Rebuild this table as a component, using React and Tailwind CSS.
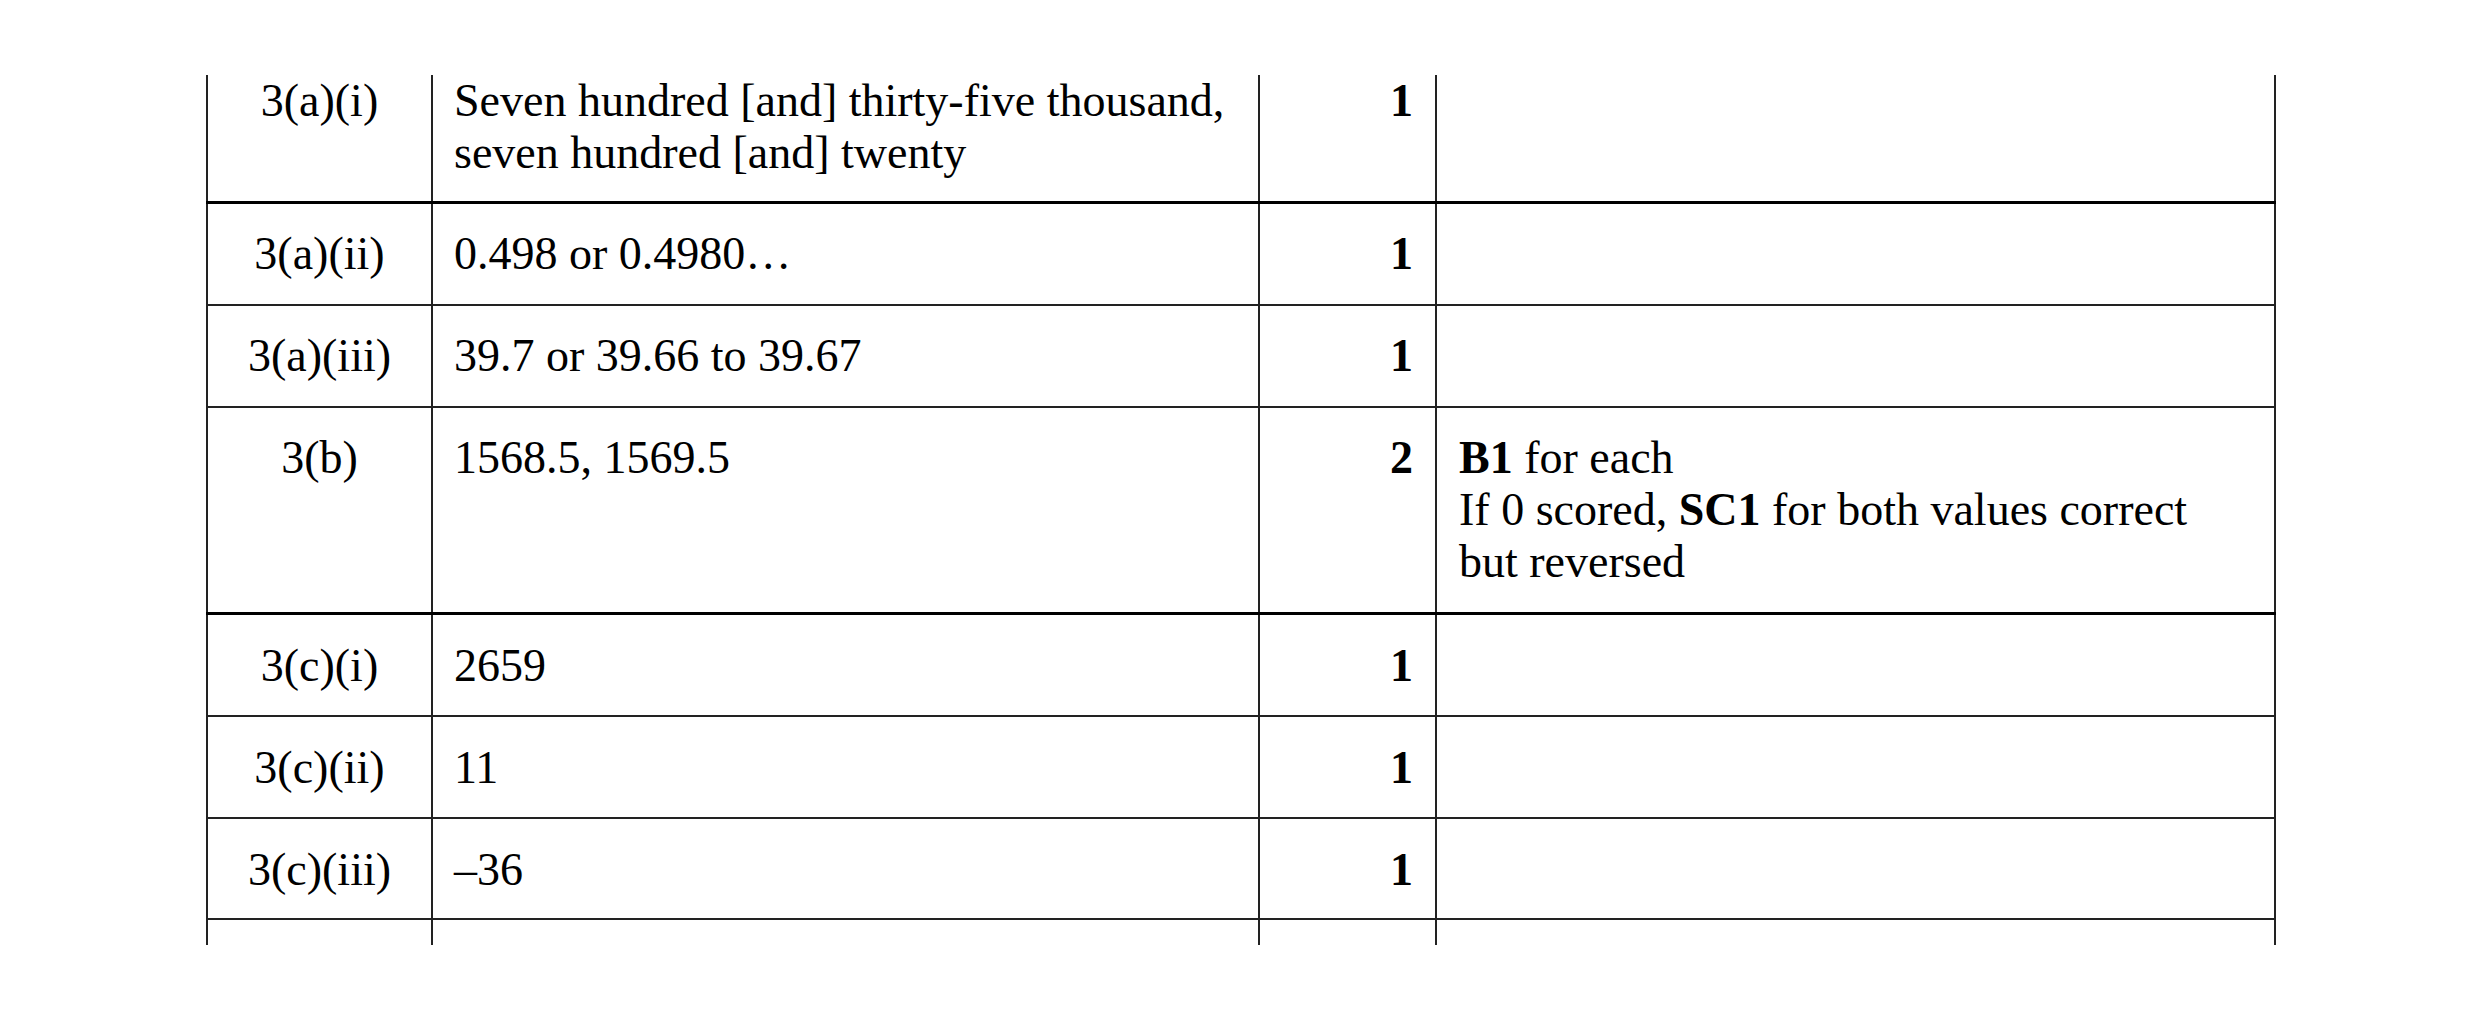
import React from "react";

const font = { fontFamily: '"Liberation Serif", "Times New Roman", serif' };

function Row({ h, pt, q, ans, mark, notes, last, thick }) {
  const bb = last ? "" : thick ? "border-b-[3px] border-b-black" : "border-b-2 border-b-[#222]";
  return (
    <div className={"flex " + h + " " + bb}>
      <div className={"w-[225px] shrink-0 border-l-2 border-[#222] text-center " + pt}>{q}</div>
      <div className={"w-[827px] shrink-0 border-l-2 border-[#222] pl-[21px] " + pt}>{ans}</div>
      <div className={"w-[177px] shrink-0 border-l-2 border-[#222] pr-[22px] text-right font-bold " + pt}>
        {mark}
      </div>
      <div className={"w-[841px] shrink-0 border-x-2 border-[#222] pl-[22px] " + pt}>{notes}</div>
    </div>
  );
}

export default function App() {
  return (
    <div className="min-h-[1021px] w-[2481px] bg-white text-black" style={font}>
      <div className="pl-[206px] pt-[75px] text-[46px] leading-[52px]">
        <div className="flex w-[2070px] flex-col">
          <Row
            h="h-[129px]"
            pt="pt-0"
            thick
            q="3(a)(i)"
            ans={
              <>
                Seven hundred [and] thirty-five thousand,
                <br />
                seven hundred [and] twenty
              </>
            }
            mark="1"
            notes=""
          />
          <Row h="h-[102px]" pt="pt-[24px]" q="3(a)(ii)" ans="0.498 or 0.4980…" mark="1" notes="" />
          <Row h="h-[102px]" pt="pt-[24px]" q="3(a)(iii)" ans="39.7 or 39.66 to 39.67" mark="1" notes="" />
          <Row
            h="h-[207px]"
            pt="pt-[24px]"
            thick
            q="3(b)"
            ans="1568.5, 1569.5"
            mark="2"
            notes={
              <>
                <b>B1</b> for each
                <br />
                If 0 scored, <b>SC1</b> for both values correct
                <br />
                but reversed
              </>
            }
          />
          <Row h="h-[102px]" pt="pt-[25px]" q="3(c)(i)" ans="2659" mark="1" notes="" />
          <Row h="h-[102px]" pt="pt-[25px]" q="3(c)(ii)" ans="11" mark="1" notes="" />
          <Row h="h-[101px]" pt="pt-[25px]" q="3(c)(iii)" ans="–36" mark="1" notes="" />
          <Row h="h-[25px]" pt="" last q="" ans="" mark="" notes="" />
        </div>
      </div>
    </div>
  );
}
